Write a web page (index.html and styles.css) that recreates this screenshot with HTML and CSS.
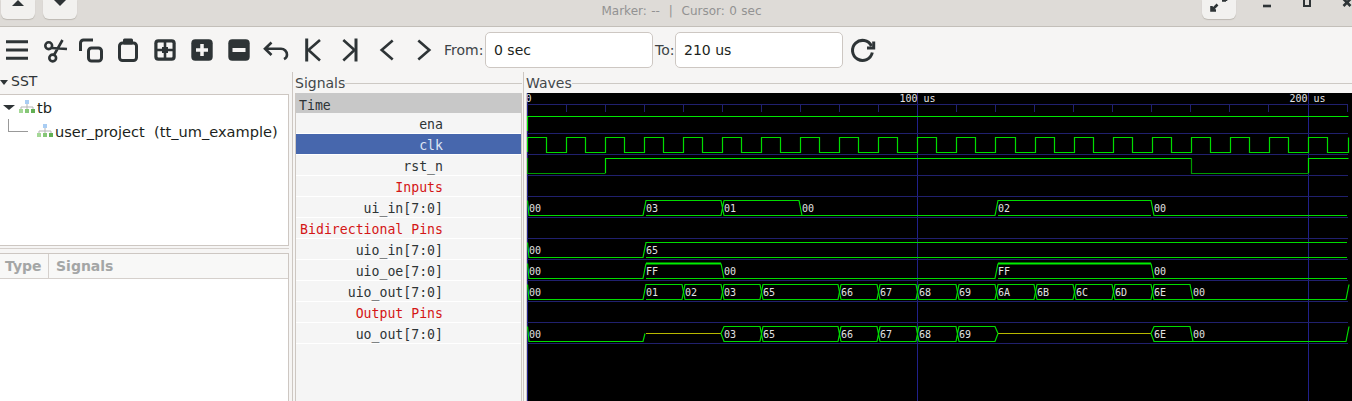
FILE: index.html
```html
<!DOCTYPE html>
<html lang="en">
<head>
<meta charset="utf-8">
<title>GTKWave</title>
<link rel="stylesheet" href="styles.css">
</head>
<body>
<div class="titlebar">
  <div class="tb-left">
    <div class="hb-btn hb-up"><span class="tri-up"></span></div>
    <div class="hb-btn hb-down"><span class="tri-down"></span></div>
  </div>
  <div class="tb-title">Marker: -- &nbsp;|&nbsp; Cursor: 0 sec</div>
  <div class="tb-right">
    <div class="hb-btn hb-full">
      <svg class="ico" width="26" height="14" viewBox="0 0 26 14"><path class="dk w25" d="M10 10.5H5.5V6M5.5 10.5L11.5 4.5"/><path class="dk w25" d="M16 0.5H20M20 -3V1"/></svg>
    </div>
    <svg class="win" width="40" height="14" viewBox="0 0 40 14"><path class="dk w25" d="M16 6H24"/></svg>
    <svg class="win" width="40" height="14" viewBox="0 0 40 14"><rect class="dk w2" x="17" y="-2" width="6" height="8"/></svg>
    <svg class="win" width="40" height="14" viewBox="0 0 40 14"><path class="dk w25" d="M16.5 -1L23.5 6M23.5 -1L16.5 6"/></svg>
  </div>
</div>

<div class="toolbar">
  <button class="tool"><svg class="ico" width="30" height="30" viewBox="0 0 30 30"><path class="dk w3" d="M4 6.7H26M4 15H26M4 23.3H26"/></svg></button>
  <button class="tool"><svg class="ico" width="30" height="30" viewBox="0 0 30 30"><circle class="dk w25" cx="9.7" cy="10.7" r="3.4"/><circle class="dk w25" cx="13.7" cy="23" r="3.4"/><path class="dk w25" d="M12.5 13L28 14M15 20L23.5 5"/></svg></button>
  <button class="tool"><svg class="ico" width="30" height="30" viewBox="0 0 30 30"><path class="dk w3" d="M17 5H7.5a3 3 0 0 0-3 3V16"/><rect class="dk w3" x="12.5" y="13" width="13" height="13" rx="3"/></svg></button>
  <button class="tool"><svg class="ico" width="30" height="30" viewBox="0 0 30 30"><rect class="dk w3" x="6.5" y="8" width="17" height="17.5" rx="3"/><rect class="fl" x="10" y="3.5" width="10" height="6" rx="1.5"/></svg></button>
  <button class="tool"><svg class="ico" width="30" height="30" viewBox="0 0 30 30"><rect class="fl" x="4.3" y="4.3" width="21.4" height="21.4" rx="4"/><rect class="lt" x="7.5" y="7.5" width="15" height="15" rx="1"/><path class="dk w25" d="M15 6V24M6 15H24"/><rect class="fl" x="12" y="12" width="6" height="6"/></svg></button>
  <button class="tool"><svg class="ico" width="30" height="30" viewBox="0 0 30 30"><rect class="fl" x="4.3" y="4.3" width="21.4" height="21.4" rx="4"/><path class="wh w35" d="M9 15H21M15 9V21"/></svg></button>
  <button class="tool"><svg class="ico" width="30" height="30" viewBox="0 0 30 30"><rect class="fl" x="4.3" y="4.3" width="21.4" height="21.4" rx="4"/><path class="wh w4" d="M8.5 15H21.5"/></svg></button>
  <button class="tool"><svg class="ico" width="30" height="30" viewBox="0 0 30 30"><path class="dk w25" d="M10.5 7.5L4 13.7L10.5 20M4 13.7H20a6 6 0 0 1 6 6c0 2-1 3.5-3 4.5"/></svg></button>
  <button class="tool"><svg class="ico" width="30" height="30" viewBox="0 0 30 30"><path class="dk w3" d="M8.7 3.5V26.5"/><path class="dk w25" d="M22 5L10.5 15L22 25.5"/></svg></button>
  <button class="tool"><svg class="ico" width="30" height="30" viewBox="0 0 30 30"><path class="dk w3" d="M21 3.5V26.5"/><path class="dk w25" d="M8.3 5L19.5 15L8.3 25.5"/></svg></button>
  <button class="tool"><svg class="ico" width="30" height="30" viewBox="0 0 30 30"><path class="dk w25" d="M20.7 5.5L9.7 15L20.7 24.5"/></svg></button>
  <button class="tool"><svg class="ico" width="30" height="30" viewBox="0 0 30 30"><path class="dk w25" d="M9.3 5.5L20.3 15L9.3 24.5"/></svg></button>
  <span class="tlabel tlabel-from">From:</span>
  <div class="field">0 sec</div>
  <span class="tlabel tlabel-to">To:</span>
  <div class="field">210 us</div>
  <button class="tool"><svg class="ico" width="30" height="30" viewBox="0 0 30 30"><path class="dk w3" d="M24.5 11A10 10 0 1 0 25.3 17.5"/><path class="dk w3" d="M26.7 6.5V13H20"/></svg></button>
</div>

<div class="main">
  <section class="left">
    <div class="sst-head"><span class="tri-sst"></span><span>SST</span></div>
    <div class="tree">
      <div class="tree-row">
        <span class="tree-arrow"></span>
        <svg class="hier" width="16" height="14" viewBox="0 0 16 14"><rect class="h-blue" x="6" y="0" width="4" height="4"/><path class="h-link" d="M8 4V7M2 9V7H14V9M8 7V9"/><rect class="h-g1" x="0" y="9" width="4" height="4"/><rect class="h-g2" x="6" y="9" width="4" height="4"/><rect class="h-g3" x="12" y="9" width="4" height="4"/></svg>
        <span class="tree-name">tb</span>
      </div>
      <div class="tree-row tree-child">
        <span class="tree-conn"></span>
        <svg class="hier" width="16" height="14" viewBox="0 0 16 14"><rect class="h-blue" x="6" y="0" width="4" height="4"/><path class="h-link" d="M8 4V7M2 9V7H14V9M8 7V9"/><rect class="h-g1" x="0" y="9" width="4" height="4"/><rect class="h-g2" x="6" y="9" width="4" height="4"/><rect class="h-g3" x="12" y="9" width="4" height="4"/></svg>
        <span class="tree-name">user_project&nbsp;&nbsp;(tt_um_example)</span>
      </div>
    </div>
    <div class="pane-bar"></div>
    <div class="siglist">
      <div class="siglist-head"><div class="col-type">Type</div><div class="col-sig">Signals</div></div>
    </div>
  </section>

  <section class="signals">
    <div class="frame-head"><span class="frame-label">Signals</span><span class="frame-line"></span></div>
    <div class="names">
      <div class="name-time">Time</div>
      <div class="name">ena</div>
      <div class="name name-sel">clk</div>
      <div class="name">rst_n</div>
      <div class="name name-red">Inputs</div>
      <div class="name">ui_in[7:0]</div>
      <div class="name name-red">Bidirectional Pins</div>
      <div class="name">uio_in[7:0]</div>
      <div class="name">uio_oe[7:0]</div>
      <div class="name">uio_out[7:0]</div>
      <div class="name name-red">Output Pins</div>
      <div class="name">uo_out[7:0]</div>
    </div>
  </section>

  <section class="waves">
    <div class="frame-head"><span class="frame-label">Waves</span><span class="frame-line"></span></div>
    <div class="wave-box">
      <svg class="wave" width="825" height="308" viewBox="527 93 825 308">
        <rect class="bg" x="527" y="93" width="825" height="308"/>
        <!-- grid -->
        <path class="major" d="M527.5 93V401M917.5 93V401M1308.5 93V401"/>
        <path class="sep" d="M527 104.5H1348M527 133.5H1348M527 154.5H1348M527 175.5H1348M527 196.5H1348M527 217.5H1348M527 238.5H1348M527 259.5H1348M527 280.5H1348M527 301.5H1348M527 322.5H1348M527 343.5H1348"/>
        <path class="sep" d="M566.5 104V112M605.5 104V112M644.5 104V112M683.5 104V112M722.5 104V112M761.5 104V112M800.5 104V112M839.5 104V112M878.5 104V112M956.5 104V112M995.5 104V112M1034.5 104V112M1073.5 104V112M1112.5 104V112M1151.5 104V112M1190.5 104V112M1229.5 104V112M1268.5 104V112M1347.5 104V112"/>
        <text class="tm" x="525.5" y="102">0</text>
        <text class="tm" x="899.5" y="102">100 us</text>
        <text class="tm" x="1289.5" y="102">200 us</text>
        <!-- ena -->
        <path class="hi" d="M527.5 131V116.5H1348.5"/>
        <!-- clk -->
        <path class="clk" d="M527.5 152V137.5H546.5V152.5H566.5V137.5H585.5V152.5H605.5V137.5H624.5V152.5H644.5V137.5H663.5V152.5H683.5V137.5H702.5V152.5H722.5V137.5H741.5V152.5H761.5V137.5H780.5V152.5H800.5V137.5H819.5V152.5H839.5V137.5H858.5V152.5H878.5V137.5H897.5V152.5H917.5V137.5H936.5V152.5H956.5V137.5H975.5V152.5H995.5V137.5H1015.5V152.5H1035.5V137.5H1054.5V152.5H1074.5V137.5H1093.5V152.5H1113.5V137.5H1132.5V152.5H1152.5V137.5H1171.5V152.5H1191.5V137.5H1210.5V152.5H1230.5V137.5H1249.5V152.5H1269.5V137.5H1288.5V152.5H1308.5V137.5H1327.5V152.5H1348.5V137.5"/>
        <!-- rst_n -->
        <path class="lo" d="M527.5 158V173.5H605.5M1191.5 158.5V173.5H1308.5"/>
        <path class="hi" d="M605.5 173V158.5H1191.5M1308.5 173V158.5H1348.5"/>
        <!-- ui_in -->
        <path class="bus" d="M527.5 200.5L529 215.5H643L646 200.5H721L724 215.5H799L802 215.5H995L998 200.5H1151L1154 215.5H1347M646 215.5H721L724 200.5H799L802 215.5M998 215.5H1151"/>
        <text class="val" x="529" y="212">00</text><text class="val" x="646" y="212">03</text><text class="val" x="724" y="212">01</text><text class="val" x="802" y="212">00</text><text class="val" x="998" y="212">02</text><text class="val" x="1154" y="212">00</text>
        <!-- uio_in -->
        <path class="bus" d="M527.5 242.5L529 257.5H643L646 242.5H1347M646 257.5H1347"/>
        <text class="val" x="529" y="254">00</text><text class="val" x="646" y="254">65</text>
        <!-- uio_oe -->
        <path class="bus" d="M527.5 263.5L529 278.5H643L646 263.5M646 278.5H995L998 263.5M998 278.5H1347M721 263.5L724 278.5M1151 263.5L1154 278.5"/>
        <path class="bus-thick" d="M646 263.5H721M998 263.5H1151"/>
        <text class="val" x="529" y="275">00</text><text class="val" x="646" y="275">FF</text><text class="val" x="724" y="275">00</text><text class="val" x="998" y="275">FF</text><text class="val" x="1154" y="275">00</text>
        <!-- uio_out -->
        <path class="bus" d="M527.5 284.5L529 299.5H643L646 284.5H682L685 299.5H721L724 284.5H760L763 299.5H838L841 284.5H877L880 299.5H916L919 284.5H956L959 299.5H995L998 284.5H1034L1037 299.5H1073L1076 284.5H1112L1115 299.5H1151L1154 284.5H1190L1193 299.5H1346L1349 284.5"/>
        <path class="bus" d="M646 299.5H682L685 284.5H721L724 299.5H760L763 284.5H838L841 299.5H877L880 284.5H916L919 299.5H956L959 284.5H995L998 299.5H1034L1037 284.5H1073L1076 299.5H1112L1115 284.5H1151L1154 299.5H1190L1193 299.5"/>
        <text class="val" x="529" y="296">00</text><text class="val" x="646" y="296">01</text><text class="val" x="685" y="296">02</text><text class="val" x="724" y="296">03</text><text class="val" x="763" y="296">65</text><text class="val" x="841" y="296">66</text><text class="val" x="880" y="296">67</text><text class="val" x="919" y="296">68</text><text class="val" x="959" y="296">69</text><text class="val" x="998" y="296">6A</text><text class="val" x="1037" y="296">6B</text><text class="val" x="1076" y="296">6C</text><text class="val" x="1115" y="296">6D</text><text class="val" x="1154" y="296">6E</text><text class="val" x="1193" y="296">00</text>
        <!-- uo_out -->
        <path class="undef" d="M646 333.5H721M998 333.5H1151"/>
        <path class="bus" d="M527.5 326.5L529 341.5H643L645 333.5"/>
        <path class="bus" d="M721 333.5L724 326.5H760L763 341.5H838L841 326.5H877L880 341.5H916L919 326.5H956L959 341.5H995L998 333.5M721 333.5L724 341.5H760L763 326.5H838L841 341.5H877L880 326.5H916L919 341.5H956L959 326.5H995L998 333.5"/>
        <path class="bus" d="M1151 333.5L1154 326.5H1190L1193 341.5H1346L1349 326.5M1151 333.5L1154 341.5H1190L1193 341.5"/>
        <text class="val" x="529" y="338">00</text><text class="val" x="724" y="338">03</text><text class="val" x="763" y="338">65</text><text class="val" x="841" y="338">66</text><text class="val" x="880" y="338">67</text><text class="val" x="919" y="338">68</text><text class="val" x="959" y="338">69</text><text class="val" x="1154" y="338">6E</text><text class="val" x="1193" y="338">00</text>
      </svg>
    </div>
  </section>
</div>
</body>
</html>
```
FILE: styles.css
```css
* { box-sizing: border-box; }
html, body { margin: 0; padding: 0; }
body {
  width: 1352px;
  height: 401px;
  overflow: hidden;
  background: #f6f5f4;
  color: #2e3436;
  font-family: "DejaVu Sans", sans-serif;
  font-size: 14px;
  display: flex;
  flex-direction: column;
}

/* title bar */
.titlebar {
  height: 27px;
  flex: none;
  background: #dedbd7;
  border-bottom: 1px solid #c3bfb9;
  display: grid;
  grid-template-columns: 1fr auto 1fr;
  overflow: hidden;
}
.tb-left { display: flex; padding-left: 1px; gap: 8px; }
.tb-right { display: flex; justify-content: flex-end; align-items: flex-start; margin-right: -15px; }
.tb-title {
  padding-left: 11px;
  padding-top: 4px;
  font-size: 12px;
  word-spacing: 0.6px;
  line-height: 15px;
  color: #929292;
  white-space: nowrap;
}
.hb-btn {
  width: 34px;
  height: 19px;
  background: #f2f1ef;
  border-radius: 0 0 6px 6px;
  box-shadow: 0 1px 1px #bdb9b3;
  display: flex;
  justify-content: center;
}
.hb-full { margin-right: 11px; }
.tri-up { width: 0; height: 0; border: 6px solid transparent; border-top: 0; border-bottom: 6px solid #2e3436; }
.tri-down { width: 0; height: 0; border: 6px solid transparent; border-bottom: 0; border-top: 6px solid #2e3436; }
.win { flex: none; display: block; overflow: hidden; }

/* toolbar */
.toolbar {
  height: 45px;
  flex: none;
  display: flex;
  align-items: center;
  margin-left: -2px;
  padding-top: 1px;
}
.tool {
  width: 37px;
  height: 36px;
  flex: none;
  padding: 0;
  border: 0;
  background: none;
  display: flex;
  align-items: center;
  justify-content: center;
}
.ico { display: block; overflow: visible; }
.dk { fill: none; stroke: #2e3436; }
.wh { fill: none; stroke: #f6f5f4; }
.fl { fill: #2e3436; }
.lt { fill: #f6f5f4; }
.w2 { stroke-width: 2; }
.w25 { stroke-width: 2.6; }
.w3 { stroke-width: 3; }
.w35 { stroke-width: 3.5; }
.w4 { stroke-width: 4; }
.tlabel { flex: none; white-space: nowrap; color: #3d4346; }
.tlabel-from { margin-left: 2px; width: 41px; }
.tlabel-to { margin-left: 2px; width: 20px; }
.field {
  width: 168px;
  height: 36px;
  flex: none;
  background: #fff;
  border: 1px solid #cdc7c2;
  border-radius: 5px;
  padding-left: 8px;
  line-height: 34px;
  color: #1c1f20;
}

/* main panes */
.main {
  flex: 1;
  min-height: 0;
  display: grid;
  grid-template-columns: 293px 231px 1fr;
}

.left {
  border-right: 1px solid #cdc7c2;
  display: flex;
  flex-direction: column;
  padding-right: 3px;
  min-height: 0;
}
.sst-head {
  height: 22px;
  flex: none;
  display: flex;
  align-items: flex-end;
  gap: 3px;
  line-height: 17px;
  padding-bottom: 4px;
}
.tri-sst {
  width: 0;
  height: 0;
  margin-bottom: 5px;
  border: 4px solid transparent;
  border-bottom: 0;
  border-top: 5px solid #2e3436;
}
.tree {
  height: 152px;
  flex: none;
  margin-left: -1px;
  background: #fff;
  border: 1px solid #cdc7c2;
}
.tree-row { height: 24px; display: flex; align-items: center; font-size: 14.6px; color: #1c1f20; }
.tree-arrow {
  width: 0;
  height: 0;
  margin-left: 3px;
  margin-right: 4px;
  border: 6px solid transparent;
  border-bottom: 0;
  border-top: 5px solid #2e3436;
}
.tree-conn {
  width: 20px;
  height: 13px;
  margin-left: 8px;
  margin-right: 9px;
  margin-top: -12px;
  border-left: 1px solid #999;
  border-bottom: 1px solid #999;
}
.hier { flex: none; display: block; margin-right: 2px; }
.h-blue { fill: #a9cdf3; }
.h-link { fill: none; stroke: #b5b5b5; stroke-width: 1; }
.h-g1 { fill: #a4d896; }
.h-g2 { fill: #86c777; }
.h-g3 { fill: #62b054; }
.pane-bar { height: 3px; flex: none; margin-top: 2px; border-top: 1px solid #d5d0cc; }
.siglist {
  flex: 1;
  margin-top: 2px;
  margin-left: -1px;
  background: #fff;
  border: 1px solid #cdc7c2;
  border-bottom: 0;
}
.siglist-head {
  height: 25px;
  display: flex;
  border-bottom: 1px solid #d5d0cc;
  background: #f8f8f7;
  font-weight: bold;
  color: #a4a6a6;
  line-height: 24px;
  font-size: 14px;
}
.col-type { width: 49px; padding-left: 5px; border-right: 1px solid #d5d0cc; }
.col-sig { padding-left: 7px; }

/* signal names */
.signals {
  padding-left: 2px;
  padding-right: 1px;
  border-right: 1px solid #cdc7c2;
  display: flex;
  flex-direction: column;
  min-height: 0;
}
.frame-head {
  height: 21px;
  flex: none;
  display: flex;
  align-items: center;
  padding-top: 1px;
  font-size: 14px;
  line-height: 18px;
  color: #43484a;
}
.frame-label { flex: none; }
.frame-line { flex: 1; height: 1px; background: #cdc9c4; margin-top: 1px; }
.names {
  flex: 1;
  background: #f5f5f5;
  border-left: 1px solid #cdc7c2;
  border-right: 1px solid #cdc7c2;
  font-family: "DejaVu Sans Mono", monospace;
  font-size: 13.2px;
  color: #2e3436;
}
.name-time {
  height: 20px;
  background: #c8c8c8;
  padding-left: 3px;
  line-height: 25px;
}
.name {
  height: 21px;
  border-bottom: 1px solid #fff;
  text-align: right;
  padding-right: 78px;
  line-height: 24px;
  white-space: pre;
}
.name-sel { background: #4767ad; color: #dde4f3; }
.name-red { color: #d41616; }

/* waves */
.waves {
  padding-left: 2px;
  display: flex;
  flex-direction: column;
  min-height: 0;
  min-width: 0;
}
.wave-box { flex: 1; border-left: 1px solid #cdc7c2; min-height: 0; }
.wave { display: block; }
.bg { fill: #000; }
.sep { fill: none; stroke: #20206e; stroke-width: 1; }
.major { fill: none; stroke: #20208a; stroke-width: 1; }
.hi { fill: none; stroke: #00e600; stroke-width: 1.2; }
.lo { fill: none; stroke: #009a00; stroke-width: 1.2; }
.clk { fill: none; stroke: #00dc00; stroke-width: 1.2; }
.bus { fill: none; stroke: #00dc00; stroke-width: 1.2; }
.bus-thick { fill: none; stroke: #00f000; stroke-width: 2; }
.undef { fill: none; stroke: #b8b800; stroke-width: 1; }
.tm, .val {
  font-family: "DejaVu Sans Mono", monospace;
  font-size: 10px;
  fill: #e2e2e2;
}
```
